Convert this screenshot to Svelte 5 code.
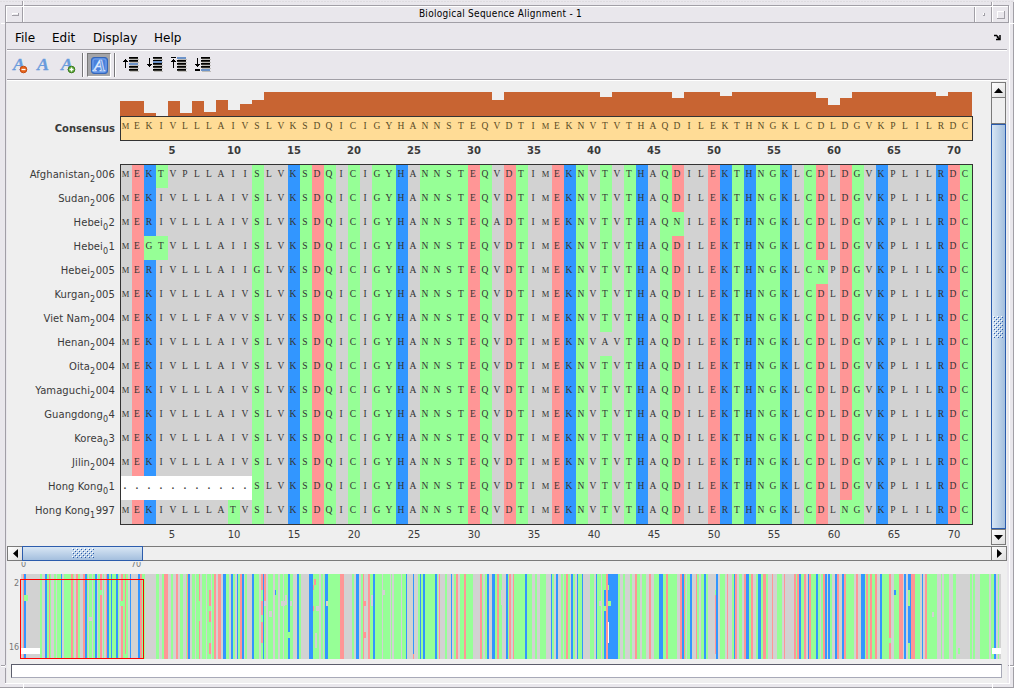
<script>
  const consensus = 'MEKIVLLLAIVSLVKSDQICIGYHANNSTEQVDTIMEKNVTVTHAQDILEKTHNGKLCDLDGVKPLILRDC';
  const tops = { 1: 15, 2: 15, 3: 3, 4: 0, 5: 15, 6: 3, 7: 15, 8: 4, 9: 16, 10: 6, 11: 12, 12: 16, 32: 16, 41: 19, 47: 18, 51: 20, 59: 18, 60: 11, 61: 18, 69: 20 };
  const bars = [...consensus].map((_, i) => tops[i + 1] ?? 24);

  const raw = [
    ['Afghanistan', '2', '006', { 4: 'T', 6: 'P', 11: 'I' }],
    ['Sudan', '2', '006', {}],
    ['Hebei', '0', '2', { 3: 'R', 32: 'A', 47: 'N' }],
    ['Hebei', '0', '1', { 3: 'G', 4: 'T', 11: 'I' }],
    ['Hebei', '2', '005', { 3: 'R', 11: 'I', 12: 'G', 59: 'N', 60: 'P', 69: 'K' }],
    ['Kurgan', '2', '005', {}],
    ['Viet Nam', '2', '004', { 8: 'F', 10: 'V' }],
    ['Henan', '2', '004', { 41: 'A' }],
    ['Oita', '2', '004', {}],
    ['Yamaguchi', '2', '004', {}],
    ['Guangdong', '0', '4', {}],
    ['Korea', '0', '3', {}],
    ['Jilin', '2', '004', {}],
    ['Hong Kong', '0', '1', Object.fromEntries(Array.from({ length: 11 }, (_, i) => [i + 1, '.']))],
    ['Hong Kong', '1', '997', { 10: 'T', 51: 'R', 61: 'N' }]
  ];
  const rows = raw.map(([name, sub, tail, diff]) => ({
    name, sub, tail, seq: [...consensus].map((c, i) => diff[i + 1] ?? c)
  }));
  const kind = (c) => (c === '.' ? 'gap' : 'DE'.includes(c) ? 'acid' : 'KRH'.includes(c) ? 'base' : 'GSTYCNQ'.includes(c) ? 'polar' : 'hydro');
  const ticks = Array.from({ length: 14 }, (_, i) => (i + 1) * 5);

  // Overview columns: colour code followed by the end position, in thirds of a pixel.
  const runs =
    's69 r72 b78 s120 g126 s135 b141 g147 r150 g154 s162 g168 s171 g183 b186 s191 g213 r219 g222 s228 r234 g240 s249 r255 b261 g264 s267 g276 s279 g285 b291 s294 g300 r306 s309 g312 s318 r321 b327 g333 b336 g348 b354 g357 s363 r369 g375 r378 g384 s390 b393 s414 b420 r426 g435 s468 g477 s486 g492 r504 s513 g519 s528 r534 s540 g549 s558 g561 r564 b570 s576 g585 s588 g597 r600 s606 g617 s621 g627 r633 s636 g642 r648 s654 r663 s669 b678 g687 s693 b699 g704 s711 b714 g720 r726 b732 s736 g742 s756 b762 g777 s783 r789 b792 r798 s804 g820 s826 g834 s840 g850 s852 g864 b870 g879 s891 b897 g903 s927 b939 g957 s963 g969 s972 g975 b984 g1020 ' +
    'r1032 s1056 g1062 s1068 b1077 s1084 g1089 r1092 s1104 r1110 g1119 b1125 g1146 s1150 g1170 s1173 g1175 s1182 g1203 s1205 g1218 b1221 s1239 b1242 s1254 g1260 b1263 g1269 b1275 g1305 b1311 g1314 s1317 r1320 s1335 g1341 s1353 b1356 s1362 g1368 r1374 s1380 g1392 r1398 g1419 s1440 r1446 g1450 s1456 g1461 b1467 s1476 b1485 g1491 r1497 g1506 s1518 b1524 g1527 r1533 s1539 r1542 g1575 b1581 g1596 s1605 g1611 s1620 g1638 s1653 b1656 g1662 s1668 b1674 s1683 g1689 s1692 g1698 r1704 g1710 s1713 b1719 g1725 s1731 b1734 g1746 b1749 s1770 g1782 s1788 b1791 g1803 s1806 g1812 b1818 r1824 b1854 g1860 s1869 g1875 s1890 g1896 s1905 r1911 g1921 s1926 g1938 s1947 r1953 s1962 g1977 b1989 g1998 r2004 ' +
    'g2032 s2040 r2046 b2052 r2055 g2058 s2061 g2070 b2076 s2088 r2091 g2098 s2104 g2112 b2118 g2124 s2146 r2148 b2154 s2160 g2176 s2181 r2184 s2196 g2202 b2206 r2211 s2218 g2226 s2232 r2238 b2247 g2252 r2259 s2268 g2274 b2283 g2289 r2298 g2304 s2316 r2319 s2331 g2346 s2352 r2355 s2382 r2388 g2391 r2397 b2403 g2412 r2418 s2424 b2428 r2433 g2448 b2454 g2460 s2463 g2469 r2475 b2481 s2484 b2490 g2496 s2505 b2511 r2517 s2526 b2532 r2538 g2562 s2568 r2574 s2583 b2595 g2598 r2604 g2610 r2616 g2625 r2631 s2640 b2646 g2667 r2673 s2682 g2697 r2709 s2712 b2718 s2724 b2733 r2745 g2760 s2766 b2769 s2775 r2781 g2812 s2824 g2826 s2832 g2848 s2860 g2868 s2910 g2916 s2919 g2925 s2940 g2968 s2974 g2982 b2988 s2994 g2997 s3003';
  let at = 63;
  const stripes = runs.trim().split(/\s+/).map((t) => {
    const end = +t.slice(1);
    const s = { k: t[0], x: Math.round(at / 3), w: Math.round(end / 3) - Math.round(at / 3) };
    at = end;
    return s;
  });
  const patches = [
    ['g', 24, 595, 4, 6], ['w', 21, 648, 19, 6], ['g', 99, 590, 3, 5], ['s', 88, 617, 5, 4], ['g', 120, 601, 3, 5], ['g', 125, 654, 1, 5],
    ['g', 199, 601, 1, 20], ['g', 209, 574, 2, 16], ['g', 209, 606, 2, 5], ['g', 209, 622, 2, 21], ['g', 209, 654, 2, 5],
    ['g', 261, 590, 2, 11], ['g', 261, 615, 2, 7], ['g', 261, 643, 2, 16], ['s', 264, 601, 2, 5], ['g', 264, 606, 2, 53],
    ['b', 275, 590, 1, 5], ['g', 288, 632, 2, 6], ['r', 314, 579, 2, 6], ['r', 313, 585, 1, 5], ['r', 313, 606, 1, 5], ['s', 326, 601, 2, 5],
    ['s', 281, 601, 4, 5], ['s', 285, 595, 2, 10], ['s', 269, 611, 3, 6], ['s', 316, 606, 3, 5], ['s', 315, 633, 2, 15], ['s', 290, 601, 2, 5],
    ['s', 382, 590, 3, 5], ['s', 371, 595, 2, 11], ['r', 364, 601, 2, 5], ['r', 364, 632, 2, 6], ['r', 413, 654, 1, 5],
    ['s', 501, 590, 1, 15], ['g', 604, 574, 2, 16], ['g', 602, 606, 4, 5], ['g', 608, 585, 1, 5], ['g', 608, 601, 3, 5],
    ['s', 599, 601, 3, 5], ['w', 608, 622, 1, 21], ['s', 715, 574, 1, 16], ['g', 715, 590, 1, 5], ['s', 715, 654, 1, 5],
    ['b', 894, 590, 2, 5], ['g', 908, 590, 2, 16], ['g', 908, 643, 2, 16], ['g', 889, 638, 2, 5], ['s', 932, 612, 2, 5],
    ['g', 958, 648, 2, 6], ['w', 992, 648, 9, 6]
  ];
  const grips = [];
  for (let y = 0; y < 10; y += 2) for (let x = (y % 4 ? 2 : 0); x < 22; x += 4) grips.push([x, y]);
  const menus = ['File', 'Edit', 'Display', 'Help'];
  const moves = ['up', 'down', 'top', 'bottom'];
</script>

{#snippet glyphA(badge)}
  <svg class="icon" width="18" height="18" viewBox="0 0 18 18">
    <text class="ga" x="2" y="13" textLength="12" lengthAdjust="spacingAndGlyphs">A</text>
    {#if badge}
      <circle cx="12.5" cy="12.5" r="3.3" fill={badge === 'minus' ? '#e8641b' : '#5fa838'} stroke={badge === 'minus' ? '#c24a10' : '#397a1c'} />
      <path d={badge === 'minus' ? 'M10.5 12.5h4' : 'M10.5 12.5h4M12.5 10.5v4'} stroke="#fff" stroke-width="1.3" />
    {/if}
  </svg>
{/snippet}

<div class="window">
  <svg class="frame" width="1014" height="688" shape-rendering="crispEdges">
    <path d="M0 1.5H1014" stroke="#dedce0" stroke-dasharray="2 1" />
    <path d="M5.5 665V5.5H1009M22.5 1V22.5M5.5 22.5H1009M974.5 6V22.5M991.5 2V22.5M1008.5 6V23M1 665.5H5M1013.5 2V688M5 668V684M0 687.5H1014M975 22.5h34M1008 665.5h5" fill="none" stroke="#a19fa6" />
    <path d="M6.5 22V6.5H1008M23.5 1V22M1 23.5H5M975.5 7V22M992.5 2V22M1009.5 6V684M5 683.5H1009M1 666.5H5M1010 23.5h4M1009 666.5h5M23.5 684v4M992.5 684v4" fill="none" stroke="#fff" />
    <path d="M12.5 15V13.5H18M983.5 15V13.5H985M997.5 19V11.5H1004" fill="none" stroke="#fff" />
    <path d="M12 15.5H18.5V13M983 15.5h1.5V13M997 18.5H1004.5V11" fill="none" stroke="#a19fa6" />
  </svg>
  <header class="title">Biological Sequence Alignment - 1</header>
  <nav class="menu">
    {#each menus as m}<span class="m-{m}">{m}</span>{/each}
    <svg width="9" height="7" viewBox="0 0 9 7"><path d="M1 1.500H3.500L5.500 3.500M7 1V5.500H3M4 3l3 2.500" fill="none" stroke="#000" stroke-width="1.500" /></svg>
  </nav>
  <div class="tools">
    {@render glyphA('minus')}{@render glyphA()}{@render glyphA('plus')}
    <i class="sep"></i>
    <span class="pressed">
      <svg width="17" height="17" viewBox="0 0 17 17">
        <rect x=".5" y=".5" width="16" height="16" rx="2.500" fill="#4a80dc" stroke="#3465b8" />
        <rect x="2" y="2" width="13" height="13" rx="2" fill="none" stroke="#77a4ec" />
        <text class="ga in" x="2.500" y="13.500" textLength="12" lengthAdjust="spacingAndGlyphs">A</text>
      </svg>
    </span>
    <i class="sep two"></i>
    {#each moves as m}
      <svg class="move" width="17" height="16" viewBox="0 0 17 16" shape-rendering="crispEdges">
        {#if m === 'up' || m === 'top'}
          <rect x="3" y="3" width="1" height="9" /><rect x="2" y="4" width="3" height="1" /><rect x="1" y="5" width="5" height="1" />
        {:else}
          <rect x="3" y="2" width="1" height="9" /><rect x="2" y="9" width="3" height="1" /><rect x="1" y="8" width="5" height="1" />
        {/if}
        {#each [1, 4, 7, 10, 13] as y}
          <rect x="7" {y} width="9" height="1" fill="#000" />
          <rect x="7" y={y + 1} width="9" height="1" fill="#34332f" />
          <rect x="8" y={y + 2} width="9" height="1" fill="#bdbbb8" />
        {/each}
        {#if m === 'up'}<rect x="7" y="7" width="9" height="2" fill="#6d93c8" />{/if}
        {#if m === 'down'}<rect x="7" y="5" width="9" height="2" fill="#6d93c8" />{/if}
        {#if m === 'top'}<rect x="1" y="1" width="5" height="1" /><rect x="7" y="1" width="9" height="2" fill="#6d93c8" />{/if}
        {#if m === 'bottom'}<rect x="1" y="13" width="5" height="2" /><rect x="7" y="13" width="9" height="2" fill="#6d93c8" />{/if}
      </svg>
    {/each}
  </div>
  <main>
    <div class="work">
      <section class="align">
        <div class="line bars"><span class="name"></span>
          <div class="cells">{#each bars as h}<i style="height:{h}px"></i>{/each}</div>
        </div>
        <div class="line"><span class="name strong">Consensus</span>
          <div class="cells box cons">{#each consensus as c}<b class:wide={c === 'M'}>{c}</b>{/each}</div>
        </div>
        <div class="line ticks strong"><span class="name"></span><div class="cells">{#each ticks as t}<span class:two={t > 9}>{t}</span>{/each}</div></div>
        <div class="block">
          <div class="names">
            {#each rows as r}<div class="name">{r.name}<sub>{r.sub}</sub>{r.tail}</div>{/each}
          </div>
          <div class="matrix box">
            {#each rows as r}<div class="cells">{#each r.seq as c}<b class={kind(c)} class:wide={c === 'M'}>{c}</b>{/each}</div>{/each}
          </div>
        </div>
        <div class="line ticks plain"><span class="name"></span><div class="cells">{#each ticks as t}<span class:two={t > 9}>{t}</span>{/each}</div></div>
      </section>
      <div class="vbar">
        <span class="btn"><svg width="9" height="5"><path d="M0 5 4.500 0 9 5z" /></svg></span>
        <span class="trackv"></span>
        <span class="thumbv"><svg width="11" height="22" shape-rendering="crispEdges">
          {#each grips as [x, y]}<rect x={y} y={x} width="1" height="1" fill="#fff" /><rect x={y + 1} y={x + 1} width="1" height="1" fill="#2c5cac" />{/each}
        </svg></span>
        <span class="btn"><svg width="9" height="5"><path d="M0 0 4.500 5 9 0z" /></svg></span>
      </div>
    </div>
    <div class="hbar">
      <span class="btn"><svg width="5" height="9"><path d="M5 0 0 4.500 5 9z" /></svg></span>
      <span class="thumbh"><svg width="22" height="11" shape-rendering="crispEdges">
        {#each grips as [x, y]}<rect {x} {y} width="1" height="1" fill="#fff" /><rect x={x + 1} y={y + 1} width="1" height="1" fill="#2c5cac" />{/each}
      </svg></span>
      <span class="trackh"></span>
      <span class="btn last"><svg width="5" height="9"><path d="M0 0 5 4.500 0 9z" /></svg></span>
    </div>
    <svg class="overview" width="999" height="101" viewBox="7 562 999 101" shape-rendering="crispEdges">
      <g class="lab"><text x="21" y="567">0</text><text x="131" y="567">70</text><text x="14" y="586">2</text><text x="9" y="650">16</text></g>
      {#each stripes as s}<rect class={s.k} x={s.x} y="574" width={s.w} height="85" />{/each}
      {#each patches as [k, x, y, w, h]}<rect class={k} {x} {y} width={w} height={h} />{/each}
      <rect x="20.500" y="579.500" width="123" height="79" fill="none" stroke="#f00" />
    </svg>
    <div class="status"></div>
  </main>
</div>

<style>
  :global(body) { margin: 0; overflow: hidden; }
  * { box-sizing: border-box; }
  svg { display: block; }
  .window { position: relative; width: 1014px; height: 688px; background: #e9e7ec; font-family: 'DejaVu Sans', sans-serif; color: #3a3a3a; overflow: hidden; padding: 6px 7px 0; }
  .frame { position: absolute; inset: 0; }
  .title { height: 18px; text-align: center; font: 10px/15px 'DejaVu Sans Condensed', 'DejaVu Sans', sans-serif; font-stretch: condensed; letter-spacing: .27px; color: #000; padding-right: 13px; }
  .menu { height: 27px; display: flex; align-items: center; padding: 1px 5px 0 8px; font: 12px/26px 'DejaVu Sans', sans-serif; color: #000; border-bottom: 1px solid #fff; box-shadow: inset 0 -1px #a19fa6; }
  .menu svg { margin-left: auto; }
  .menu span { padding-top: 1px; }
  .m-File { width: 37px; } .m-Edit { width: 41px; } .m-Display { width: 61px; }
  .tools { height: 30px; display: flex; align-items: flex-start; padding: 2px 0 0 4px; border-bottom: 1px solid #fff; box-shadow: inset 0 -1px #a19fa6; }
  .icon { margin: 4px 6px 0 0; flex: none; }
  .ga { font: italic bold 16px 'Liberation Serif', serif; fill: #699bdc; stroke: #699bdc; stroke-width: .3; }
  .ga.in { fill: #6795e0; stroke: #dbe8ff; stroke-width: .7; }
  .sep { width: 2px; height: 24px; background: #77767a; border-right: 1px solid #fff; margin: 0 3px 0 -1px; }
  .sep.two { margin: 0 6px 0 3px; }
  .pressed { width: 24px; height: 24px; background: #a5a5a8; border: 1px solid #777; border-right-color: #fff; border-bottom-color: #fff; padding: 3px; }
  .move { margin: 3px 7px 0 0; }
  main { background: #efefef; width: 1000px; height: 602px; }
  .work { display: flex; height: 465px; padding-top: 1px; }
  .align { width: 984px; padding-top: 10px; }
  .line { display: flex; }
  .name { width: 108px; margin-right: 5px; height: 24px; flex: none; display: block; text-align: right; font-size: 10px; letter-spacing: .07px; line-height: 22px; white-space: pre; }
  .name sub { font-size: 8px; vertical-align: -4px; line-height: 0; margin: 0 .5px 0 0; }
  .name.strong { font-weight: bold; line-height: 25px; letter-spacing: 0; }
  .cells { display: flex; width: 852px; }
  .bars .cells { height: 24px; align-items: flex-end; }
  .bars i { width: 12px; background: #c86432; }
  .box { position: relative; }
  .box::after { content: ''; position: absolute; inset: 0 -1px -1px 0; border: 1px solid #333; }
  .cells b { width: 12px; height: 24px; font: 9.500px/20px 'Liberation Serif', serif; display: flex; justify-content: center; padding-right: 2px; color: #333; }
  .cells .wide { font-size: 8.500px; padding-right: 1px; }
  .cells .gap { font-weight: bold; }
  .cons b { background: #ffdc96; color: #594a24; }
  .ticks { height: 24px; font-size: 10px; }
  .ticks .cells { padding-left: 22px; }
  .ticks .cells span { width: 60px; text-align: center; line-height: 21px; flex: none; }
  .ticks .cells .two { padding-left: 4px; }
  .ticks.strong { font-weight: bold; }
  .block { display: flex; }
  .names { width: 113px; }
  .matrix { width: 852px; height: 360px; }
  .hydro { background: #d2d2d2; } .polar { background: #96ff96; } .acid { background: #ff9696; } .base { background: #3296ff; } .gap { background: #fff; }
  .s { fill: #d2d2d2; } .g { fill: #96ff96; } .r { fill: #ff9696; } .b { fill: #3296ff; } .w { fill: #fff; }
  .vbar { width: 15px; height: 463px; display: flex; flex-direction: column; }
  .btn { width: 15px; height: 16px; flex: none; display: grid; place-items: center; border: 1px solid #7a7a7a; background: linear-gradient(135deg, #fff, #dedede); }
  .trackv { height: 26px; border: 1px solid #7a7a7a; border-top: 0; }
  .thumbv { height: 405px; border: 1px solid #2c5cac; background: linear-gradient(90deg, #d8e6f4, #a4bfde); display: grid; place-items: center; }
  .hbar { height: 16px; display: flex; }
  .hbar .btn { height: 15px; width: 15px; border-right: 0; }
  .hbar .last { width: 16px; border-right: 1px solid #7a7a7a; }
  .thumbh { width: 121px; height: 15px; border: 1px solid #2c5cac; background: linear-gradient(#d8e6f4, #a4bfde); display: grid; place-items: center; }
  .trackh { flex: 1; height: 15px; border: 1px solid #7a7a7a; border-width: 1px 0; }
  .lab { font-size: 8px; fill: #777; }
  .status { margin: 1px 0 0 4px; width: 991px; height: 14px; background: #fff; border: 1px solid #a8aab8; border-top-color: #5c5e6c; border-left-color: #5c5e6c; }
</style>
